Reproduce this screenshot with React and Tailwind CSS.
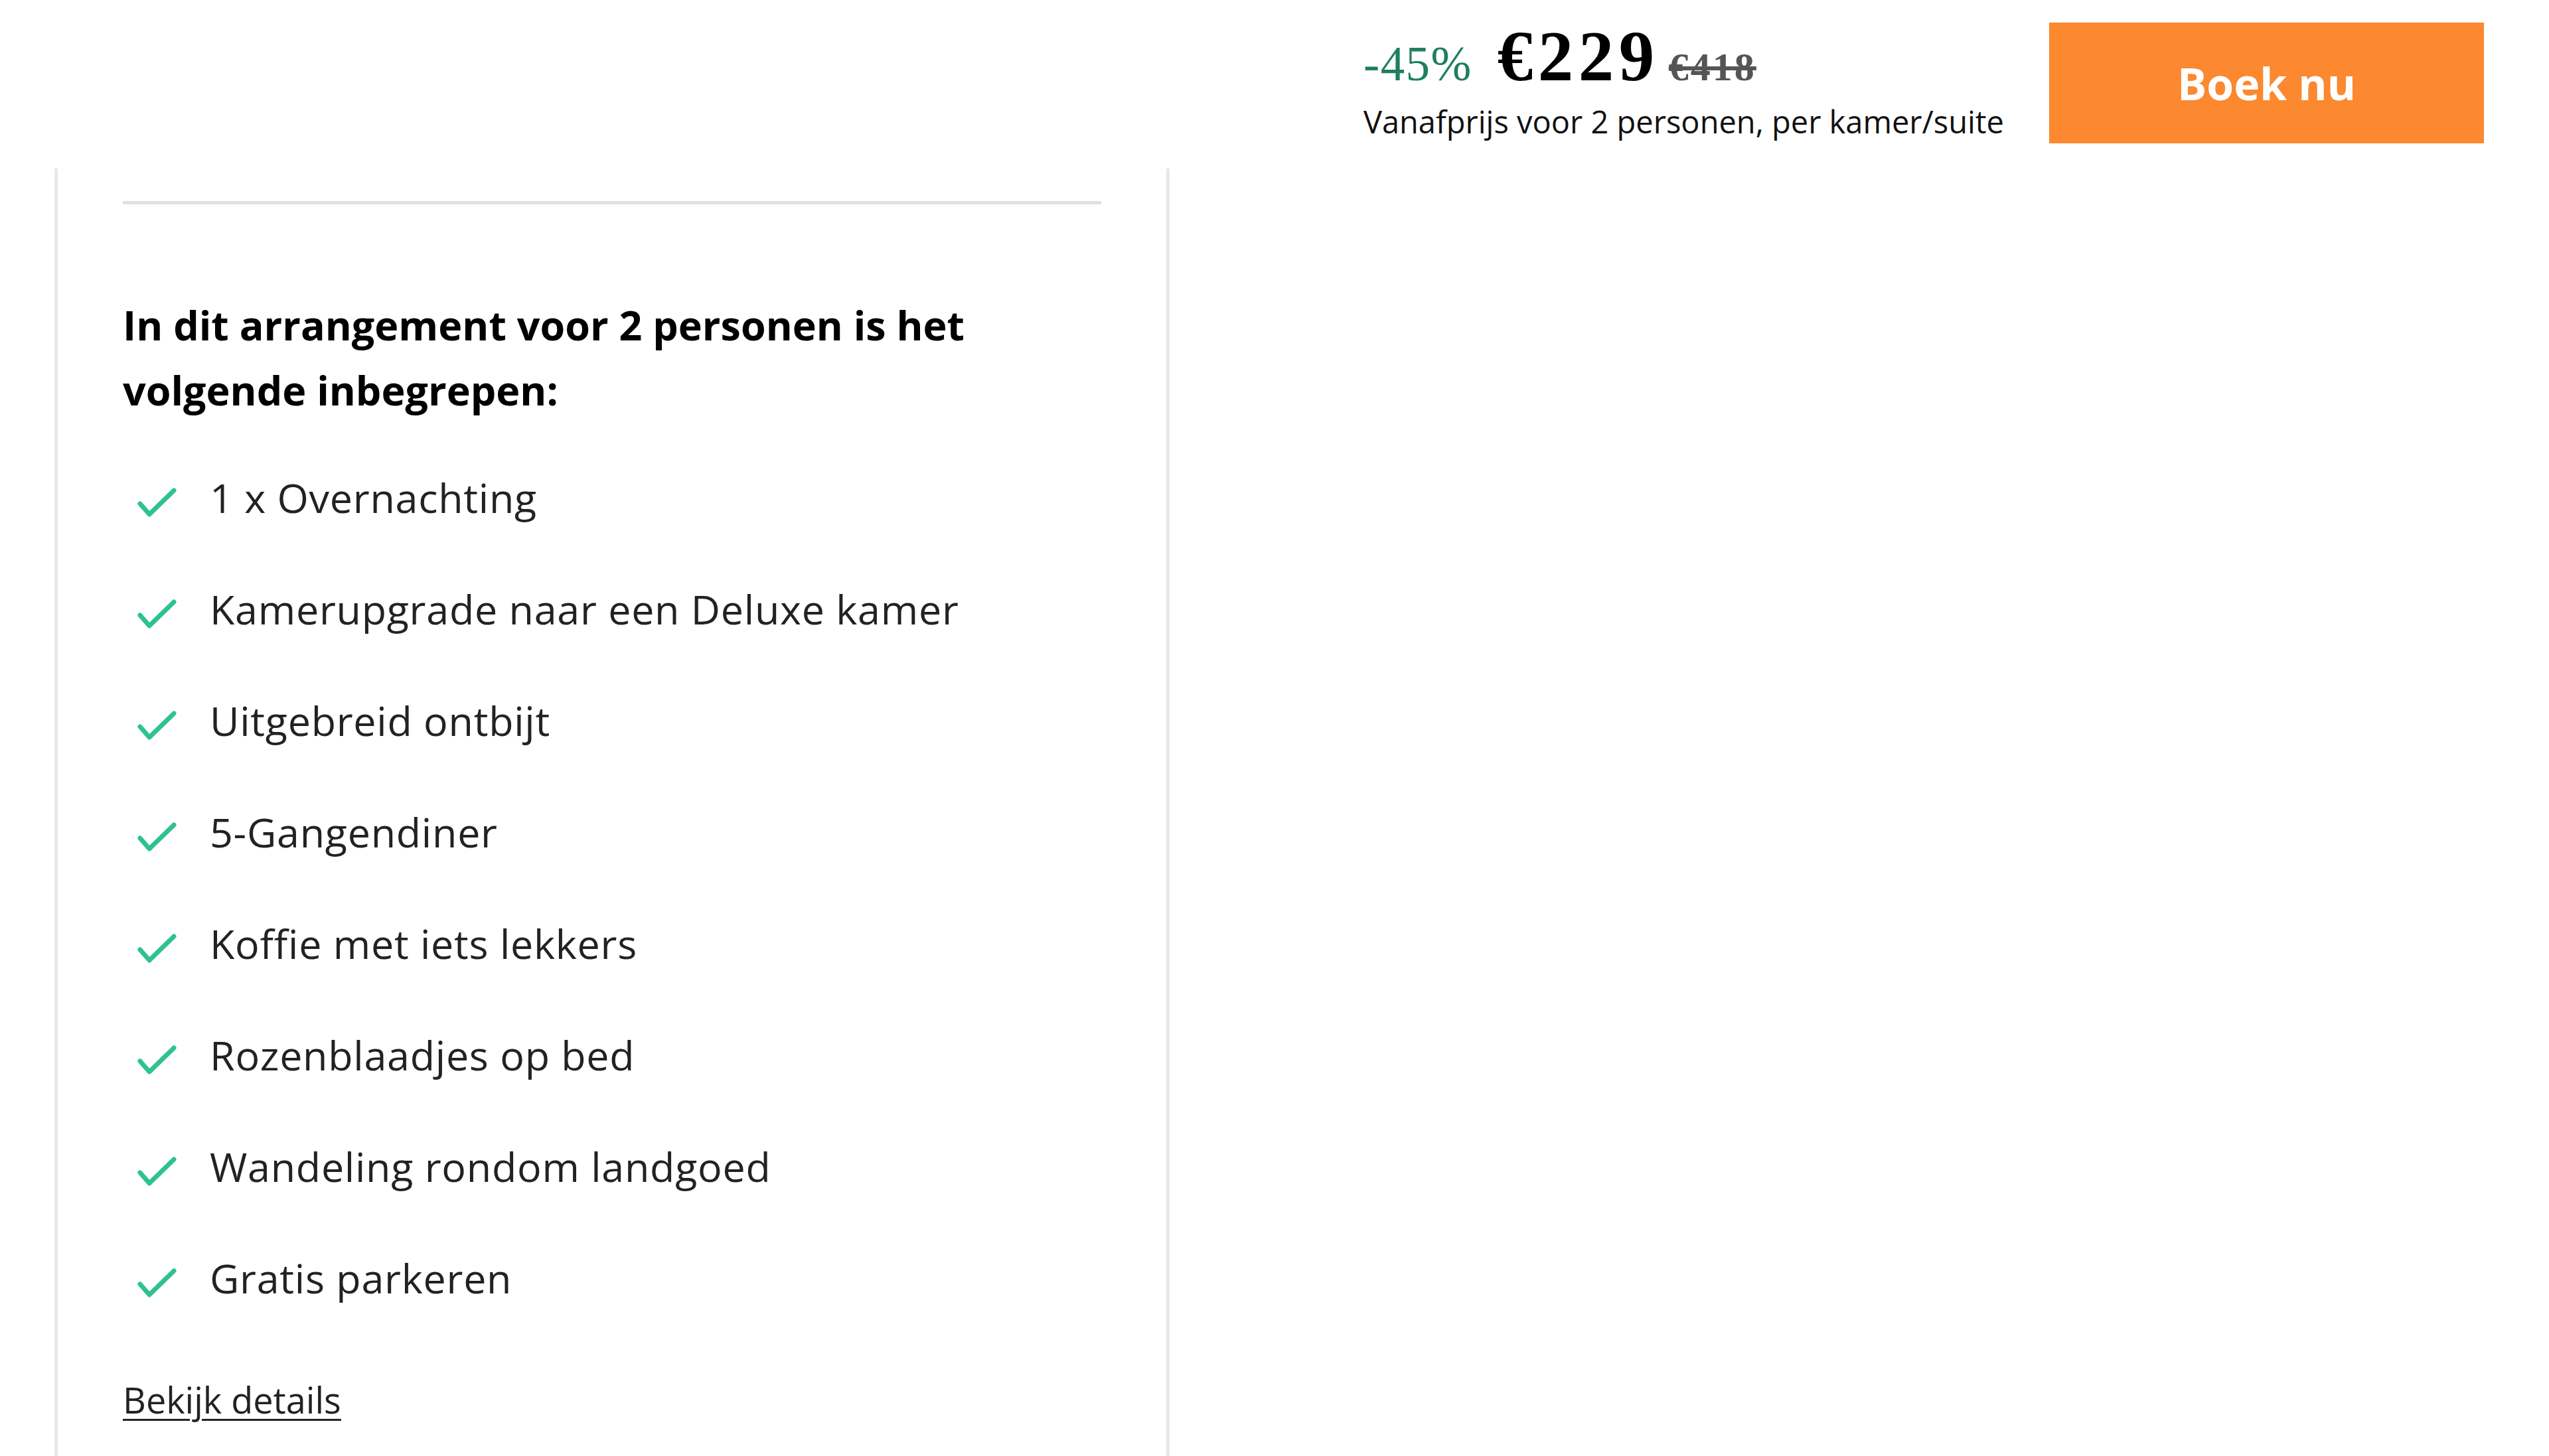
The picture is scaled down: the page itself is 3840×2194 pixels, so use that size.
const items = [
    '1 x Overnachting',
    'Kamerupgrade naar een Deluxe kamer',
    'Uitgebreid ontbijt',
    '5-Gangendiner',
    'Koffie met iets lekkers',
    'Rozenblaadjes op bed',
    'Wandeling rondom landgoed',
    'Gratis parkeren',
];

function CheckMark() {
    return (
        <svg width="60" height="50" viewBox="0 0 60 50" className="shrink-0 mt-[18px]">
            <path d="M4 27 L18 43 L55 7" fill="none" stroke="#2ec28e" strokeWidth="7" strokeLinecap="round" strokeLinejoin="round" />
        </svg>
    );
}

export default function App() {
    return (
        <div className="min-h-screen bg-white font-['Open_Sans','Noto_Sans',sans-serif] text-[#222]">
            {/* sticky price bar */}
            <div className="h-[254px] flex justify-end items-start pt-[34px] pr-[98px] gap-[68px]">
                <div className="flex flex-col -mt-[2px]">
                    <div className="flex items-baseline font-['Liberation_Serif',serif] leading-none">
                        <span className="text-[73px] text-[#1f7f5c] font-medium tracking-[0.02em]">-45%</span>
                        <span className="ml-[38px] text-[107px] font-bold text-black tracking-[0.07em]">€229</span>
                        <span className="ml-[14px] text-[60px] font-bold text-[#555] tracking-[0.05em] line-through">€418</span>
                    </div>
                    <p className="mt-[21px] text-[47px] leading-none text-[#111]">Vanafprijs voor 2 personen, per kamer/suite</p>
                </div>
                <button className="w-[655px] h-[182px] bg-[#fc882f] text-white font-bold text-[66px] flex items-center justify-center">
                    Boek nu
                </button>
            </div>

            {/* card */}
            <div className="ml-[82px] w-[1680px] min-h-[1940px] border-x-[5px] border-[#e8e8e8] px-[98px] pt-[49px] pb-[40px]">
                <div className="h-[5px] bg-[#e0e0e0]" />
                <h3 className="mt-[133px] text-[61px] font-bold leading-[98px] text-black">
                    In dit arrangement voor 2 personen is het volgende inbegrepen:
                </h3>
                <ul className="mt-[37px] flex flex-col">
                    {items.map(item => (
                        <li key={item} className="h-[168px] flex items-start pt-[40px]">
                            <div className="w-[131px] pl-[22px]">
                                <CheckMark />
                            </div>
                            <span className="text-[61px] leading-[72px] tracking-[0.012em]">{item}</span>
                        </li>
                    ))}
                </ul>
                <a href="#" className="inline-block mt-[64px] text-[54px] leading-none underline decoration-[3px] underline-offset-[8px] text-[#222]">
                    Bekijk details
                </a>
            </div>
        </div>
    );
}
